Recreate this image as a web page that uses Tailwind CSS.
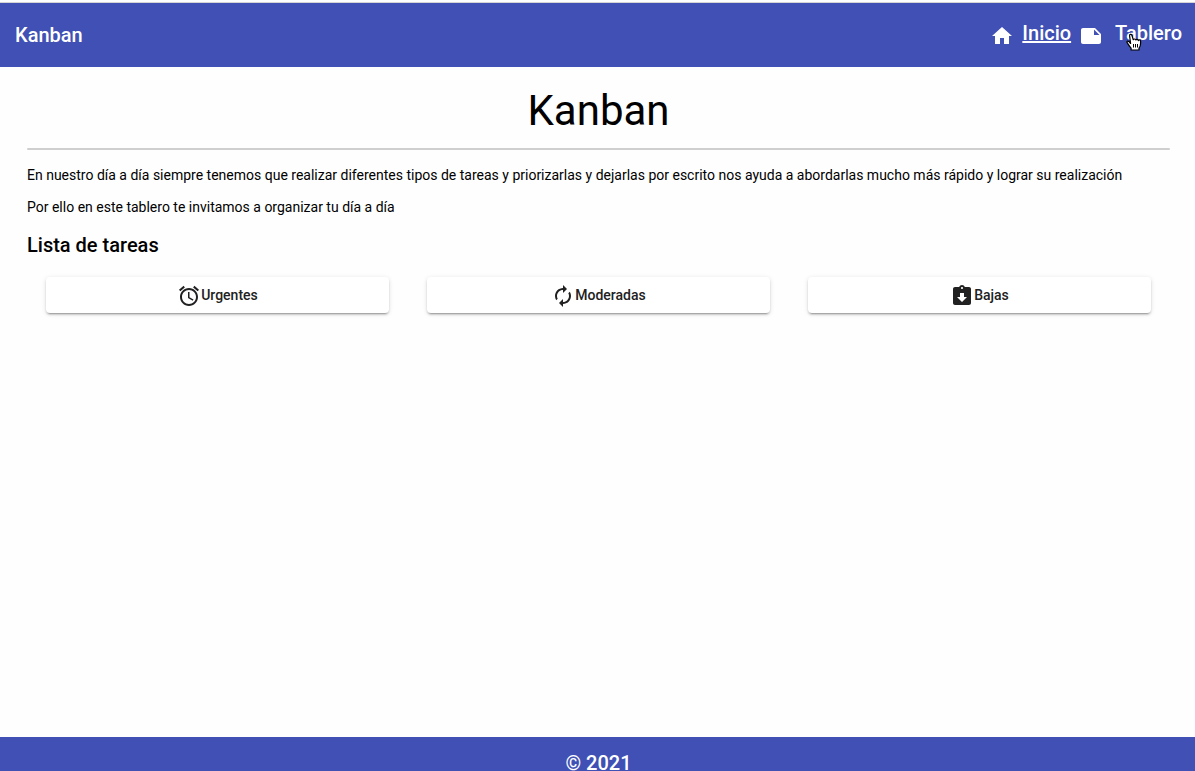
<!DOCTYPE html>
<html lang="es">
<head>
<meta charset="utf-8">
<meta name="viewport" content="width=device-width, initial-scale=1">
<title>Kanban</title>
<script src="https://cdn.jsdelivr.net/npm/@tailwindcss/browser@4"></script>
</head>
<body class="flex h-screen flex-col overflow-hidden bg-[#fefefe] font-['Roboto',sans-serif] text-sm text-black">
  <header class="mt-0.5 flex h-[65px] shrink-0 items-center justify-between border-t border-[#d5d5d5] bg-[#4050b5] pr-[13px] pl-[15px] text-xl font-medium text-white">
    <span>Kanban</span>
    <nav class="relative flex items-center">
      <svg class="mt-0.5 size-6" viewBox="0 0 24 24" fill="currentColor" aria-hidden="true"><path d="M10 20v-6h4v6h5v-8h3L12 3 2 12h3v8z"/></svg>
      <a href="#inicio" class="mb-1 ml-2 underline">Inicio</a>
      <svg class="mt-0.5 ml-2 size-6" viewBox="0 0 24 24" fill="currentColor" aria-hidden="true"><path d="M22 10l-6-6H4c-1.1 0-2 .9-2 2v12.01c0 1.1.9 1.99 2 1.99l16-.01c1.1 0 2-.89 2-1.99v-8zm-7-4.5l5.5 5.5H15V5.5z"/></svg>
      <a href="#tablero" class="mb-1 ml-3">Tablero</a>
      <svg class="absolute top-3.5 right-10 h-[18px] w-4" viewBox="0 0 16 18" aria-hidden="true"><path d="M4.600 10.500 3.300 8.900C2.300 7.900 1 7.700.9 8.700c-.1 1 1.100 2 1.700 3.200.8 1.500 2 2.300 2.500 3.300V17h7.900v-1.800c1.200-1.500 1.600-3 1.600-5V8.200c0-1.500-1.900-1.600-2.200-.6-.2-1.500-2.200-1.600-2.500-.6-.3-1.300-2.200-1.300-2.600-.3L5.900 2.200C5.300.7 3.200 1.200 3.600 2.800z" fill="#fff" stroke="#000" stroke-width="1.200" stroke-linejoin="round"/><path d="M7.500 11v3.500M9.500 11v3.500M11.500 11v3.500" stroke="#000" fill="none"/></svg>
    </nav>
  </header>
  <main class="flex-1 pt-[17px] pr-[25px] pl-[27px]">
    <h1 class="text-center text-[42px] leading-[54px]">Kanban</h1>
    <hr class="mt-2.5 h-0.5 rounded-full border-0 bg-[#cfcfcf]">
    <p class="mt-[15px] leading-5">En nuestro día a día siempre tenemos que realizar diferentes tipos de tareas y priorizarlas y dejarlas por escrito nos ayuda a abordarlas mucho más rápido y lograr su realización</p>
    <p class="mt-3 leading-5">Por ello en este tablero te invitamos a organizar tu día a día</p>
    <h2 class="mt-3 text-xl leading-8 font-medium">Lista de tareas</h2>
    <div class="mt-4 grid grid-cols-3">
      <button type="button" class="mx-auto flex h-9 w-[90%] items-center justify-center rounded bg-white font-medium text-[#212121] shadow-[0_3px_1px_-2px_rgba(0,0,0,.2),0_2px_2px_0_rgba(0,0,0,.14),0_1px_5px_0_rgba(0,0,0,.12)]">
        <svg class="mt-0.5 size-6" viewBox="0 0 24 24" fill="currentColor" aria-hidden="true"><path d="M22 5.720l-4.600-3.860-1.290 1.530 4.600 3.860L22 5.720zM7.880 3.390L6.600 1.860 2 5.710l1.290 1.530 4.590-3.850zM12.500 8H11v6l4.750 2.850.75-1.230-4-2.370V8zM12 4c-4.970 0-9 4.030-9 9s4.020 9 9 9c4.970 0 9-4.030 9-9s-4.030-9-9-9zm0 16c-3.870 0-7-3.130-7-7s3.130-7 7-7 7 3.130 7 7-3.130 7-7 7z"/></svg>
        Urgentes
      </button>
      <button type="button" class="mx-auto flex h-9 w-[90%] items-center justify-center rounded bg-white font-medium text-[#212121] shadow-[0_3px_1px_-2px_rgba(0,0,0,.2),0_2px_2px_0_rgba(0,0,0,.14),0_1px_5px_0_rgba(0,0,0,.12)]">
        <svg class="mt-0.5 size-6" viewBox="0 0 24 24" fill="currentColor" aria-hidden="true"><path d="M12 6v3l4-4-4-4v3c-4.420 0-8 3.580-8 8 0 1.570.46 3.030 1.240 4.260L6.700 14.800c-.45-.83-.7-1.790-.7-2.800 0-3.310 2.690-6 6-6zm6.760 1.740L17.300 9.200c.44.84.7 1.790.7 2.800 0 3.310-2.690 6-6 6v-3l-4 4 4 4v-3c4.420 0 8-3.580 8-8 0-1.570-.46-3.030-1.240-4.260z"/></svg>
        Moderadas
      </button>
      <button type="button" class="mx-auto flex h-9 w-[90%] items-center justify-center rounded bg-white font-medium text-[#212121] shadow-[0_3px_1px_-2px_rgba(0,0,0,.2),0_2px_2px_0_rgba(0,0,0,.14),0_1px_5px_0_rgba(0,0,0,.12)]">
        <svg class="mt-0.5 size-6" viewBox="0 0 24 24" fill="currentColor" aria-hidden="true"><path d="M19 3h-4.180C14.400 1.840 13.300 1 12 1c-1.300 0-2.400.84-2.820 2H5c-1.100 0-2 .9-2 2v14c0 1.100.9 2 2 2h14c1.100 0 2-.9 2-2V5c0-1.100-.9-2-2-2zm-7 0c.55 0 1 .45 1 1s-.45 1-1 1-1-.45-1-1 .45-1 1-1zm0 15l-5-5h3V9h4v4h3l-5 5z"/></svg>
        Bajas
      </button>
    </div>
  </main>
  <footer class="shrink-0 bg-[#4050b5] pt-3 pl-0.5 text-center text-xl leading-[22px] font-medium text-white"><p class="h-[22px] leading-7">© 2021</p></footer>
</body>
</html>
